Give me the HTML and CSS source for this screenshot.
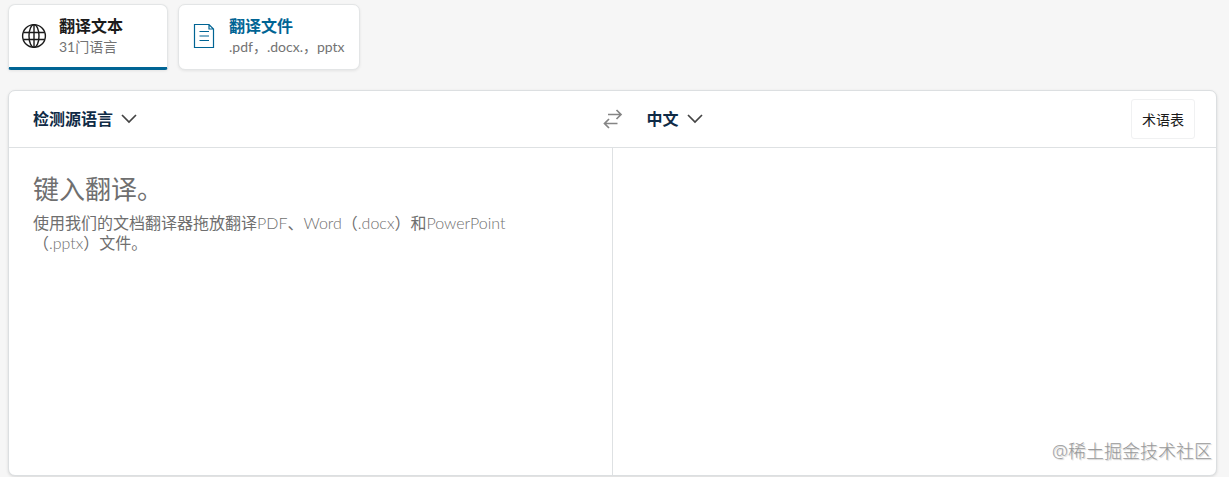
FILE: index.html
```html
<!DOCTYPE html>
<html lang="zh-CN">
<head>
    <meta charset="UTF-8">
    <meta name="viewport" content="width=device-width, initial-scale=1.0">
    <title>翻译文本</title>
    <link rel="stylesheet" href="styles.css">
</head>
<body>
    <nav class="tabs">
        <button type="button" class="tab tab-active">
            <svg class="tab-icon" viewBox="0 0 26 26" fill="none" stroke="currentColor" stroke-width="1.4">
                <circle cx="13" cy="13" r="11.4"/>
                <ellipse cx="13" cy="13" rx="5" ry="11.4"/>
                <path d="M13 1.6v22.8M2.500 9.500h21M2.500 16.500h21"/>
            </svg>
            <span class="tab-text">
                <span class="tab-title">翻译文本</span>
                <span class="tab-note">31门语言</span>
            </span>
        </button>
        <button type="button" class="tab">
            <svg class="tab-icon" viewBox="0 0 26 26" fill="none" stroke="currentColor" stroke-width="1.2">
                <path d="M3.5 1.5h14.5l4.500 4.500v18.500h-19zM18 1.5v4.500h4.500"/>
                <path d="M8.500 8.500h9.500M8.500 13h9.500M8.500 17.500h9.500"/>
            </svg>
            <span class="tab-text">
                <span class="tab-title">翻译文件</span>
                <span class="tab-note">.pdf，.docx.，pptx</span>
            </span>
        </button>
    </nav>

    <main class="translator">
        <div class="toolbar">
            <div class="toolbar-side">
                <button type="button" class="lang-button">
                    检测源语言
                    <svg class="chevron" viewBox="0 0 16 10"><path d="M1 1l7 7 7-7"/></svg>
                </button>
            </div>
            <button type="button" class="swap-button" aria-label="交换语言">
                <svg class="swap-icon" viewBox="0 0 20 20">
                    <path d="M5 5.5h12.5M13.5 1l4.500 4.500-4.500 4.500M14.500 14.500H2M6 10l-4.500 4.500L6 19"/>
                </svg>
            </button>
            <div class="toolbar-side toolbar-target">
                <button type="button" class="lang-button">
                    中文
                    <svg class="chevron" viewBox="0 0 16 10"><path d="M1 1l7 7 7-7"/></svg>
                </button>
                <button type="button" class="glossary-button">术语表</button>
            </div>
        </div>
        <div class="panes">
            <section class="pane-source">
                <textarea class="source-input" id="source" placeholder=" "></textarea>
                <label class="hint" for="source">
                    <span class="hint-title">键入翻译。</span>
                    <span class="hint-text">使用我们的文档翻译器拖放翻译PDF、Word（.docx）和PowerPoint（.pptx）文件。</span>
                </label>
            </section>
            <section class="pane-target">
                <span class="watermark">@稀土掘金技术社区</span>
            </section>
        </div>
    </main>
</body>
</html>
```
FILE: styles.css
```css
* {
    box-sizing: border-box;
}

body {
    margin: 0;
    padding: 4px 12px 1px 8px;
    min-height: 100vh;
    display: flex;
    flex-direction: column;
    gap: 20px;
    background-color: #f6f6f6;
    font-family: "Open Sans", "Noto Sans CJK SC", sans-serif;
    color: #1b1b1b;
}

button {
    font-family: inherit;
    color: inherit;
    cursor: pointer;
}

.tabs {
    display: flex;
    gap: 10px;
}

.tab {
    display: flex;
    align-items: center;
    gap: 12px;
    min-width: 160px;
    height: 66px;
    padding: 0 14px 2px 12px;
    border: 1px solid #e3e5e6;
    border-radius: 7px;
    background-color: #fff;
    box-shadow: 0 1px 3px rgba(0, 0, 0, 0.08);
    color: #006494;
    text-align: left;
}

.tab-active {
    padding-bottom: 0;
    border-bottom: 3px solid #006494;
    border-radius: 7px 7px 3px 3px;
    color: #1b1b1b;
}

.tab-icon {
    width: 26px;
    height: 26px;
}

.tab-text {
    display: flex;
    flex-direction: column;
}

.tab-title {
    font-size: 16px;
    line-height: 22px;
    font-weight: 600;
}

.tab-note {
    font-family: "Lato", "Noto Sans CJK SC", sans-serif;
    font-size: 14px;
    line-height: 20px;
    color: #737373;
}

.translator {
    flex: 1;
    display: flex;
    flex-direction: column;
    border: 1px solid #dcdfe1;
    border-radius: 7px;
    background-color: #fff;
    box-shadow: 0 1px 3px rgba(0, 0, 0, 0.12);
}

.toolbar {
    display: grid;
    grid-template-columns: 1fr 20px 1fr;
    align-items: center;
    height: 57px;
    border-bottom: 1px solid #dee1e3;
}

.toolbar-side {
    display: flex;
    align-items: center;
    padding-left: 24px;
}

.toolbar-target {
    justify-content: space-between;
    padding-right: 21px;
}

.lang-button {
    display: flex;
    align-items: center;
    gap: 8px;
    padding: 0;
    border: none;
    background: none;
    font-size: 16px;
    line-height: 24px;
    font-weight: 600;
    color: #0f2b46;
}

.chevron {
    width: 16px;
    height: 10px;
    fill: none;
    stroke: #444;
    stroke-width: 1.7;
}

.swap-button {
    display: flex;
    padding: 0;
    border: none;
    background: none;
}

.swap-icon {
    width: 20px;
    height: 20px;
    fill: none;
    stroke: #858585;
    stroke-width: 1.7;
}

.glossary-button {
    height: 40px;
    padding: 0 10px;
    border: 1px solid #f0f1f2;
    border-radius: 3px;
    background-color: #fff;
    font-size: 14px;
    color: #1b1b1b;
}

.panes {
    flex: 1;
    display: grid;
    grid-template-columns: 1fr 1fr;
}

/* the hint shares one grid cell with the textarea */
.pane-source {
    display: grid;
    border-right: 1px solid #dee1e3;
}

.source-input,
.hint {
    grid-area: 1 / 1;
    padding: 24px;
}

.source-input {
    border: none;
    outline: none;
    resize: none;
    background: none;
    font-family: inherit;
    font-size: 26px;
}

.hint {
    display: flex;
    flex-direction: column;
    gap: 7px;
    max-width: 528px;
    color: #6f6f6f;
    pointer-events: none;
}

.hint-title {
    font-size: 26px;
    line-height: 34px;
}

.hint-text {
    font-family: "Lato Light", "Lato", "Noto Sans CJK SC", sans-serif;
    font-size: 16px;
    line-height: 20px;
}

.source-input:not(:placeholder-shown) + .hint {
    visibility: hidden;
}

.pane-target {
    display: flex;
    align-items: flex-end;
    justify-content: flex-end;
    padding: 0 4px 12px;
}

.watermark {
    font-size: 18px;
    line-height: 24px;
    font-weight: 300;
    color: #999;
    text-shadow: 1px 1px 1px #ccc;
}
```
